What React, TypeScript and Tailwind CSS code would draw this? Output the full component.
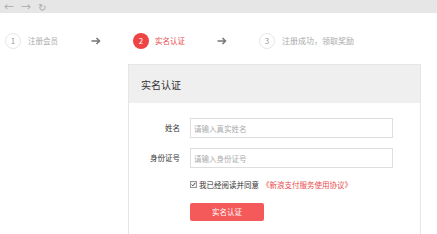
const font = { fontFamily: '"Noto Sans CJK SC", "Noto Sans", sans-serif' };

function StepCircle({ n, active }: { n: number; active?: boolean }) {
  return (
    <div
      className={
        active
          ? "w-[16px] h-[16px] rounded-full bg-[#ee4444] text-white flex items-center justify-center text-[8px]"
          : "w-[16px] h-[16px] rounded-full border border-[#e6e6e6] text-[#999] flex items-center justify-center text-[8px]"
      }
    >
      {n}
    </div>
  );
}

function Arrow() {
  return (
    <svg width="10" height="8" viewBox="0 0 10 8" className="text-[#777]">
      <path d="M0.5 4h8M5.5 1l3 3-3 3" fill="none" stroke="currentColor" strokeWidth="1.5" />
    </svg>
  );
}

export default function App() {
  return (
    <div className="w-[437px] h-[234px] overflow-hidden bg-white" style={font}>
      {/* browser bar */}
      <div className="h-[13px] bg-[#e6e6e6] flex items-center gap-[7px] pl-[4px] text-[10px] text-[#aaa] leading-none">
        <span>←</span>
        <span>→</span>
        <span>↻</span>
      </div>

      {/* steps */}
      <div className="flex items-center h-[16px] mt-[20px] pl-[5px] text-[7.5px] leading-none">
        <StepCircle n={1} />
        <span className="ml-[7px] text-[#aaa]">注册会员</span>
        <div className="ml-[33px]">
          <Arrow />
        </div>
        <div className="ml-[32px]">
          <StepCircle n={2} active />
        </div>
        <span className="ml-[6px] text-[#e84b4b]">实名认证</span>
        <div className="ml-[32px]">
          <Arrow />
        </div>
        <div className="ml-[32px]">
          <StepCircle n={3} />
        </div>
        <span className="ml-[7px] text-[#aaa] text-[8px]">注册成功，领取奖励</span>
      </div>

      {/* card */}
      <div className="ml-[128px] mt-[15px] w-[293px] h-[200px] border border-[#e6e6e6]">
        <div className="h-[38px] bg-[#efefef] flex items-center pl-[12px] text-[10px] text-[#333]">
          实名认证
        </div>
        <div className="pt-[15px] flex flex-col gap-[10px]">
          <div className="flex items-center">
            <div className="w-[51px] text-right text-[7.5px] text-[#333]">姓名</div>
            <input
              className="ml-[10px] w-[203px] h-[20px] border border-[#dedede] px-[3px] text-[7.5px] outline-none placeholder:text-[#aaa]"
              placeholder="请输入真实姓名"
            />
          </div>
          <div className="flex items-center">
            <div className="w-[51px] text-right text-[7.5px] text-[#333]">身份证号</div>
            <input
              className="ml-[10px] w-[203px] h-[20px] border border-[#dedede] px-[3px] text-[7.5px] outline-none placeholder:text-[#aaa]"
              placeholder="请输入身份证号"
            />
          </div>
        </div>
        <div className="ml-[61px] mt-[13px] flex items-center text-[7.5px] leading-none">
          <div className="w-[7px] h-[7px] border border-[#999] bg-[#f4f4f4] flex items-center justify-center">
            <svg width="5" height="5" viewBox="0 0 5 5">
              <path d="M0.6 2.6l1.2 1.2 2.6-3" fill="none" stroke="#333" strokeWidth="0.9" />
            </svg>
          </div>
          <span className="ml-[2px] text-[#333]">我已经阅读并同意</span>
          <span className="ml-[3px] text-[#e84b4b]">《新浪支付服务使用协议》</span>
        </div>
        <button className="ml-[61px] mt-[14px] w-[74px] h-[18px] rounded-[2px] bg-[#f55a5a] text-white text-[7.5px]">
          实名认证
        </button>
      </div>
    </div>
  );
}
